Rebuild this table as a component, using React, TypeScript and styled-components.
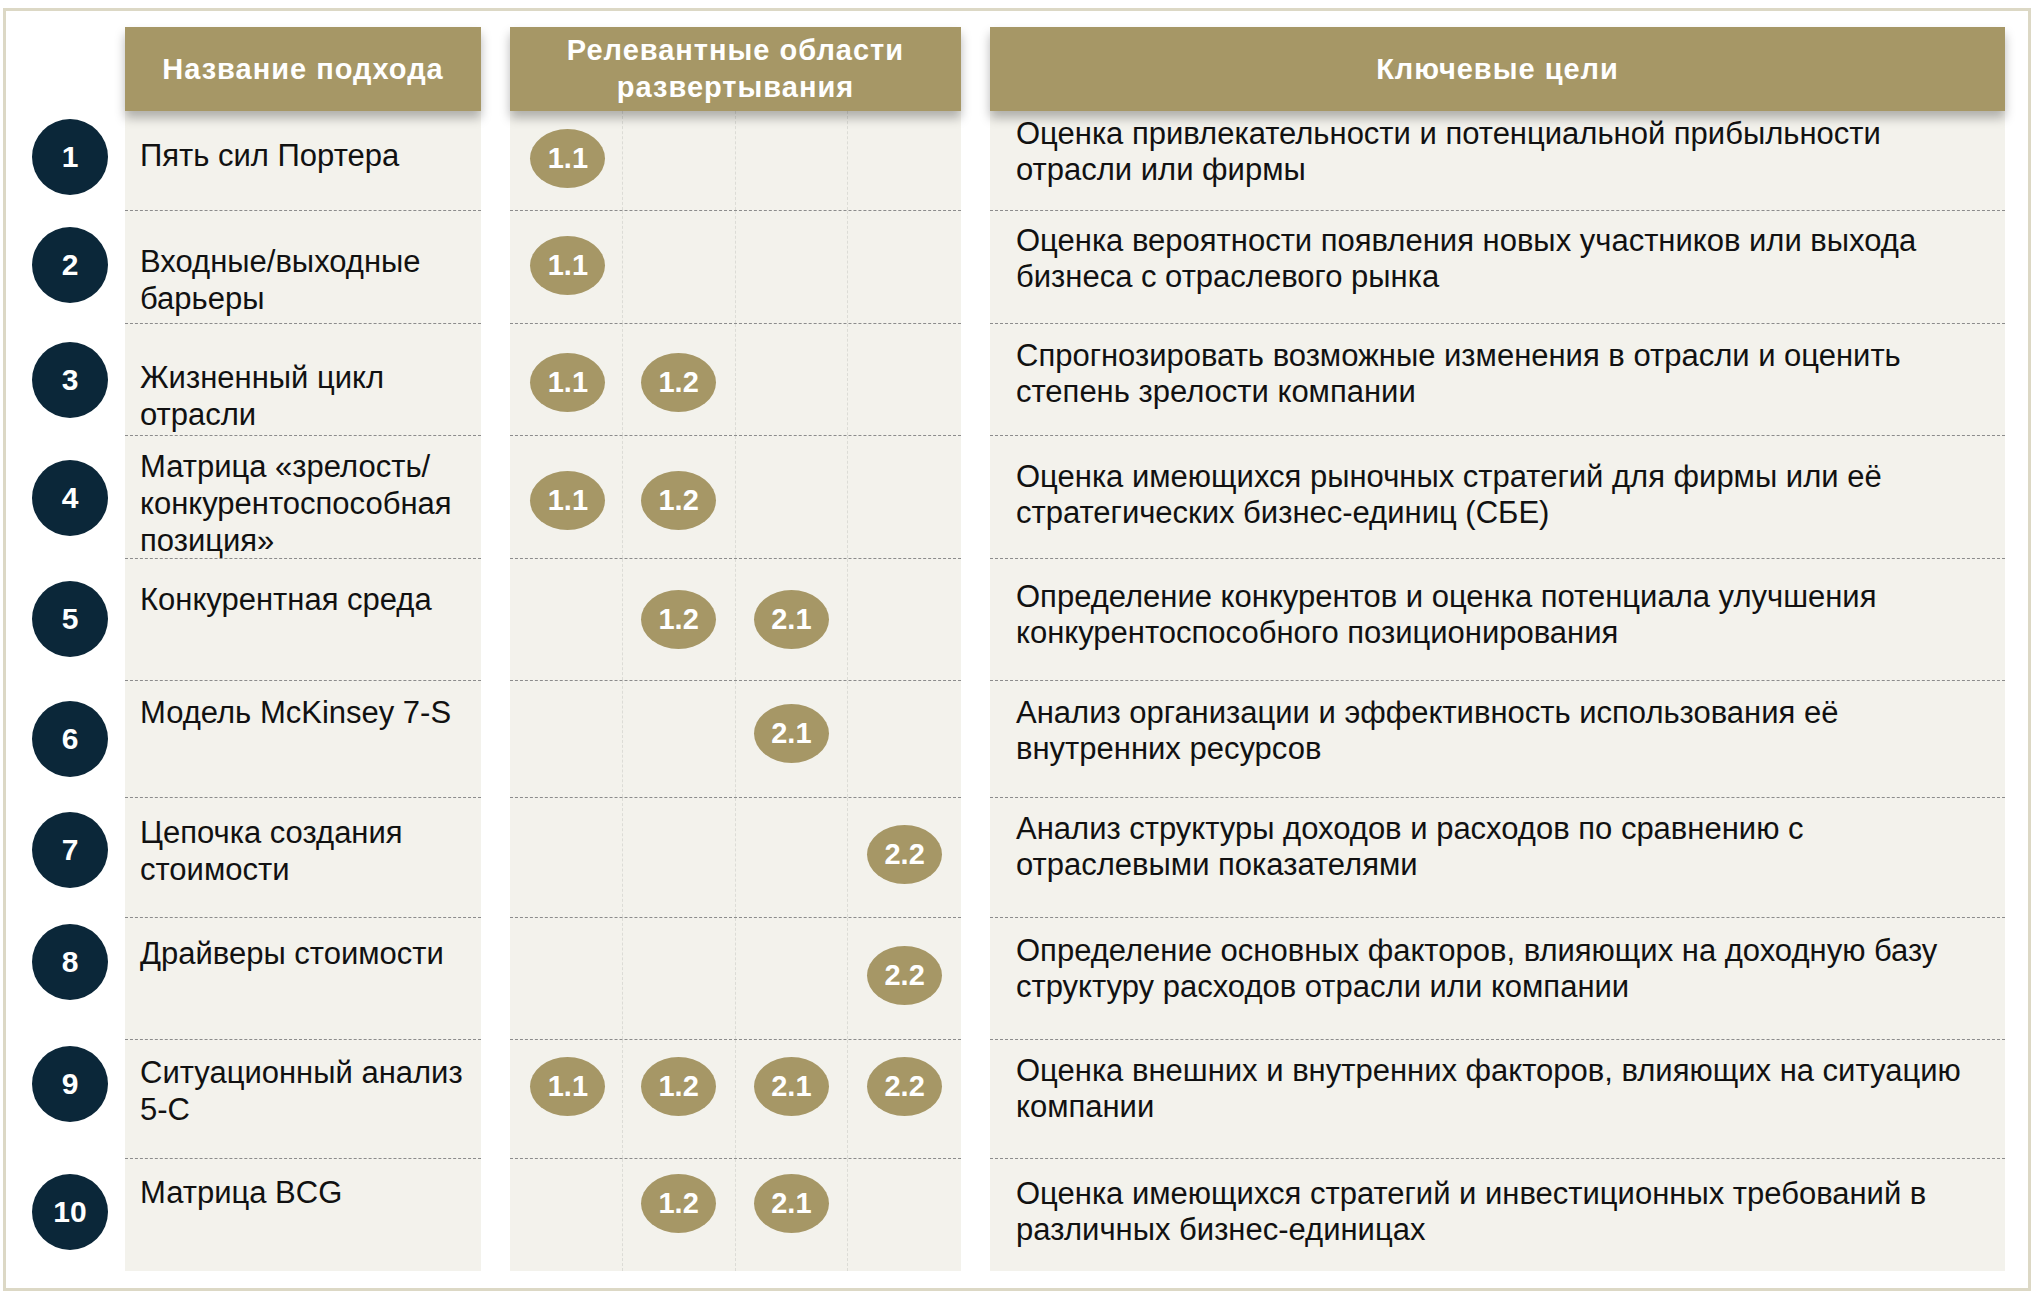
import React from 'react'
import styled, { createGlobalStyle } from 'styled-components'

const GlobalStyle = createGlobalStyle`
    html, body {
        margin: 0;
        padding: 0;
        background: #ffffff;
    }
    body {
        font-family: 'Liberation Sans', Arial, sans-serif;
        color: #111111;
    }
`

const GOLD = '#a69766'
const NAVY = '#0b2739'
const PAPER = '#f3f2ec'

const Frame = styled.div`
    margin: 8px 0 0 3px;
    width: 2028px;
    height: 1283px;
    box-sizing: border-box;
    border: 3px solid #dcd8c5;
    padding-top: 16px;
`

const HeaderRow = styled.div`
    display: flex;
    gap: 29px;
    padding-left: 119px;
    height: 84px;
`

const HeaderCell = styled.div<{ $w: number }>`
    position: relative;
    z-index: 1;
    width: ${(p) => p.$w}px;
    height: 100%;
    background: ${GOLD};
    box-shadow: 0 7px 10px rgba(0, 0, 0, 0.28);
    display: flex;
    align-items: center;
    justify-content: center;
    text-align: center;
    color: #ffffff;
    font-weight: 700;
    font-size: 29px;
    line-height: 37px;
    letter-spacing: 1px;
`

const Row = styled.div<{ $h: number }>`
    display: flex;
    height: ${(p) => p.$h}px;
`

const NumCell = styled.div<{ $top: number }>`
    width: 119px;
    box-sizing: border-box;
    padding: ${(p) => p.$top}px 0 0 26px;
    background: #ffffff;
`

const Circle = styled.div`
    width: 76px;
    height: 76px;
    border-radius: 50%;
    background: ${NAVY};
    color: #ffffff;
    font-weight: 700;
    font-size: 30px;
    display: flex;
    align-items: center;
    justify-content: center;
`

const Cell = styled.div<{ $last: boolean }>`
    box-sizing: border-box;
    height: 100%;
    background: ${PAPER};
    border-bottom: ${(p) => (p.$last ? 'none' : '1px dashed #8c8c8c')};
`

const NameCell = styled(Cell)<{ $top: number }>`
    width: 356px;
    padding: ${(p) => p.$top}px 0 0 15px;
    font-size: 31px;
    line-height: 37px;
    white-space: pre-line;
`

const BadgeCell = styled(Cell)`
    width: 451px;
    margin-left: 29px;
    display: grid;
    grid-template-columns: repeat(4, 1fr);
`

const SubCell = styled.div<{ $top: number }>`
    display: flex;
    justify-content: center;
    padding-top: ${(p) => p.$top}px;
    border-right: 1px dashed #dcdcd6;
    &:first-child {
        padding-left: 4px;
    }
    &:last-child {
        border-right: none;
    }
`

const Badge = styled.div`
    width: 75px;
    height: 59px;
    border-radius: 50%;
    background: ${GOLD};
    color: #ffffff;
    font-weight: 700;
    font-size: 29px;
    display: flex;
    align-items: center;
    justify-content: center;
`

const GoalCell = styled(Cell)<{ $top: number }>`
    width: 1015px;
    margin-left: 29px;
    padding: ${(p) => p.$top}px 0 0 26px;
    font-size: 31px;
    line-height: 36px;
    white-space: pre-line;
`

const AREAS = ['1.1', '1.2', '2.1', '2.2']

interface Approach {
    name: string
    goal: string
    areas: string[]
    h: number
    circleTop: number
    nameTop: number
    badgeTop: number
    goalTop: number
}

const approaches: Approach[] = [
    {
        name: 'Пять сил Портера',
        goal: 'Оценка привлекательности и потенциальной прибыльности\nотрасли или фирмы',
        areas: ['1.1'],
        h: 100, circleTop: 8, nameTop: 26, badgeTop: 18, goalTop: 5,
    },
    {
        name: 'Входные/выходные\nбарьеры',
        goal: 'Оценка вероятности появления новых участников или выхода\nбизнеса с отраслевого рынка',
        areas: ['1.1'],
        h: 113, circleTop: 16, nameTop: 32, badgeTop: 25, goalTop: 12,
    },
    {
        name: 'Жизненный цикл\nотрасли',
        goal: 'Спрогнозировать возможные изменения в отрасли и оценить\nстепень зрелости компании',
        areas: ['1.1', '1.2'],
        h: 112, circleTop: 18, nameTop: 35, badgeTop: 29, goalTop: 14,
    },
    {
        name: 'Матрица «зрелость/\nконкурентоспособная\nпозиция»',
        goal: 'Оценка имеющихся рыночных стратегий для фирмы или её\nстратегических бизнес-единиц (СБЕ)',
        areas: ['1.1', '1.2'],
        h: 123, circleTop: 24, nameTop: 12, badgeTop: 35, goalTop: 23,
    },
    {
        name: 'Конкурентная среда',
        goal: 'Определение конкурентов и оценка потенциала улучшения\nконкурентоспособного позиционирования',
        areas: ['1.2', '2.1'],
        h: 122, circleTop: 22, nameTop: 22, badgeTop: 31, goalTop: 20,
    },
    {
        name: 'Модель McKinsey 7-S',
        goal: 'Анализ организации и эффективность использования её\nвнутренних ресурсов',
        areas: ['2.1'],
        h: 117, circleTop: 20, nameTop: 13, badgeTop: 23, goalTop: 14,
    },
    {
        name: 'Цепочка создания\nстоимости',
        goal: 'Анализ структуры доходов и расходов по сравнению с\nотраслевыми показателями',
        areas: ['2.2'],
        h: 120, circleTop: 14, nameTop: 16, badgeTop: 27, goalTop: 13,
    },
    {
        name: 'Драйверы стоимости',
        goal: 'Определение основных факторов, влияющих на доходную базу\nструктуру расходов отрасли или компании',
        areas: ['2.2'],
        h: 122, circleTop: 6, nameTop: 17, badgeTop: 28, goalTop: 15,
    },
    {
        name: 'Ситуационный анализ\n5-C',
        goal: 'Оценка внешних и внутренних факторов, влияющих на ситуацию\nкомпании',
        areas: ['1.1', '1.2', '2.1', '2.2'],
        h: 119, circleTop: 6, nameTop: 14, badgeTop: 17, goalTop: 13,
    },
    {
        name: 'Матрица BCG',
        goal: 'Оценка имеющихся стратегий и инвестиционных требований в\nразличных бизнес-единицах',
        areas: ['1.2', '2.1'],
        h: 112, circleTop: 15, nameTop: 15, badgeTop: 15, goalTop: 17,
    },
]

export default function App() {
    return (
        <>
            <GlobalStyle />
            <Frame>
                <HeaderRow>
                    <HeaderCell $w={356}>Название подхода</HeaderCell>
                    <HeaderCell $w={451}>
                        Релевантные области
                        <br />
                        развертывания
                    </HeaderCell>
                    <HeaderCell $w={1015}>Ключевые цели</HeaderCell>
                </HeaderRow>
                {approaches.map((a, i) => {
                    const last = i === approaches.length - 1
                    return (
                        <Row key={i} $h={a.h}>
                            <NumCell $top={a.circleTop}>
                                <Circle>{i + 1}</Circle>
                            </NumCell>
                            <NameCell $last={last} $top={a.nameTop}>
                                {a.name}
                            </NameCell>
                            <BadgeCell $last={last}>
                                {AREAS.map((area) => (
                                    <SubCell key={area} $top={a.badgeTop}>
                                        {a.areas.includes(area) && <Badge>{area}</Badge>}
                                    </SubCell>
                                ))}
                            </BadgeCell>
                            <GoalCell $last={last} $top={a.goalTop}>
                                {a.goal}
                            </GoalCell>
                        </Row>
                    )
                })}
            </Frame>
        </>
    )
}
